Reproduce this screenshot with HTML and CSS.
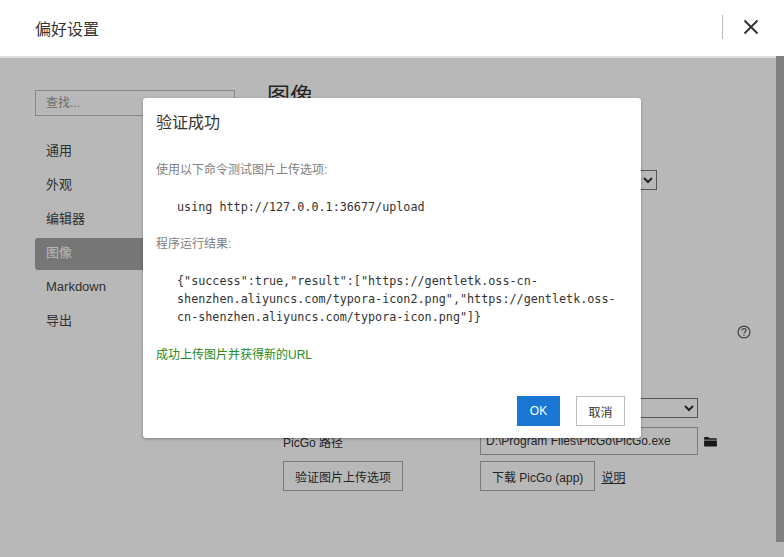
FILE: index.html
```html
<!DOCTYPE html>
<html lang="zh">
<head>
<meta charset="utf-8">
<title>偏好设置</title>
<link rel="stylesheet" href="styles.css">
</head>
<body>
<header class="titlebar">
  <h2 class="titlebar-name">偏好设置</h2>
  <span class="titlebar-sep"></span>
  <svg class="close-icon" viewBox="0 0 16 16"><path d="M1.5 1.5 14.5 14.5M14.5 1.5 1.5 14.5"/></svg>
</header>
<div class="below">
  <div class="scroller">
    <nav class="sidebar">
      <input class="search" placeholder="查找...">
      <ul class="nav">
        <li>通用</li>
        <li>外观</li>
        <li>编辑器</li>
        <li class="active">图像</li>
        <li>Markdown</li>
        <li>导出</li>
      </ul>
    </nav>
    <main class="prefs">
      <h1 class="prefs-title">图像</h1>
      <div class="row-select"><select class="select-short"><option></option></select></div>
      <div class="row-help">
        <svg class="help-icon" viewBox="0 0 14 14"><circle cx="7" cy="7" r="5.9"/><path d="M5 5.6C5 4.4 5.9 3.7 7 3.7s2 .7 2 1.8C9 7 7 7 7 8.6"/><circle class="dot" cx="7" cy="10.3" r=".8"/></svg>
      </div>
      <div class="upload-grid">
        <span></span>
        <select class="select-wide"><option></option></select>
        <span></span>
        <label class="path-label">PicGo 路径</label>
        <input class="path-input" value="D:\Program Files\PicGo\PicGo.exe">
        <svg class="folder-icon" viewBox="0 0 14 12"><path d="M0 2a1 1 0 0 1 1-1h3.6l1.4 1.5h7a1 1 0 0 1 1 1V4H0zM0 5h14v5.5a1 1 0 0 1-1 1H1a1 1 0 0 1-1-1z"/></svg>
        <button class="btn-plain">验证图片上传选项</button>
        <div class="download"><button class="btn-plain">下载 PicGo (app)</button><a class="doc-link">说明</a></div>
      </div>
    </main>
  </div>
  <div class="scroll-track"><div class="scroll-thumb"></div></div>
  <div class="overlay">
    <section class="dialog">
      <h3 class="dialog-title">验证成功</h3>
      <p class="note">使用以下命令测试图片上传选项:</p>
      <pre class="code">using http://127.0.0.1:36677/upload</pre>
      <p class="note">程序运行结果:</p>
      <pre class="code">{"success":true,"result":["https://gentletk.oss-cn-shenzhen.aliyuncs.com/typora-icon2.png","https://gentletk.oss-cn-shenzhen.aliyuncs.com/typora-icon.png"]}</pre>
      <p class="ok-note">成功上传图片并获得新的URL</p>
      <div class="actions">
        <button class="btn-ok">OK</button>
        <button class="btn-cancel">取消</button>
      </div>
    </section>
  </div>
  <div class="rule"></div>
</div>
</body>
</html>
```
FILE: styles.css
```css
* { box-sizing: border-box; }
html, body { margin: 0; height: 100%; }
body {
  width: 784px;
  height: 557px;
  overflow: hidden;
  display: flex;
  flex-direction: column;
  background: #fff;
  color: #333;
  font-family: "Liberation Sans", "Noto Sans CJK SC", sans-serif;
  font-size: 12px;
}
.titlebar {
  height: 56px;
  flex: none;
  display: flex;
  align-items: center;
  padding: 0 25px 2px 35px;
}
.titlebar-name { margin: 2px 0 0; flex: 1; font-size: 16px; font-weight: 400; color: #333; }
.titlebar-sep { width: 1px; height: 24px; background: #bbb; margin-right: 20px; }
.close-icon { width: 16px; height: 16px; fill: none; stroke: #333; stroke-width: 2; }

.below { position: relative; flex: 1; display: flex; min-height: 0; }
.rule { position: absolute; left: 0; right: 8px; top: 0; height: 2px; background: #ddd; z-index: 1; }
.scroller { flex: 1; display: flex; padding: 34px 0 0 35px; min-width: 0; }
.scroll-track { width: 8px; flex: none; }
.scroll-thumb { height: 486px; background: #b2b2b2; }

.sidebar { width: 200px; flex: none; }
.search {
  display: block;
  width: 200px;
  height: 26px;
  padding: 0 10px;
  border: 1px solid #bbb;
  border-radius: 0;
  background: #fff;
  font: 12px "Liberation Sans", "Noto Sans CJK SC", sans-serif;
}
.search::placeholder { color: #999; }
.nav { list-style: none; margin: 20px 0 0; padding: 0; display: flex; flex-direction: column; gap: 2px; }
.nav li {
  height: 32px;
  line-height: 30px;
  padding-left: 11px;
  font-size: 13px;
  border-radius: 3px;
  color: #444;
}
.nav li.active { background: #a4a4a4; color: #fff; }

.prefs { flex: 1; padding-left: 33px; min-width: 0; }
.prefs-title { margin: -10px 0 0 -1px; font-size: 23px; line-height: 32px; font-weight: 400; color: #333; }
.row-select { margin-top: 58px; display: flex; justify-content: flex-end; padding-right: 119px; }
.select-short { width: 60px; height: 20px; }
select {
  border: 1px solid #777;
  border-radius: 0;
  background: #fff;
  color: #333;
  font: 12px "Liberation Sans", sans-serif;
}
.row-help { margin-top: 135px; display: flex; justify-content: flex-end; padding-right: 25px; }
.help-icon { width: 14px; height: 14px; fill: none; stroke: #666; stroke-width: 1.3; }
.help-icon .dot { fill: #666; stroke: none; }

.upload-grid {
  margin-top: 59px;
  padding-left: 15px;
  display: grid;
  grid-template-columns: 197px 218px 1fr;
  row-gap: 6px;
  align-items: center;
}
.select-wide { width: 218px; height: 20px; margin-bottom: 3px; }
.path-label { color: #333; }
.path-input {
  width: 218px;
  height: 28px;
  padding: 0 5px;
  border: 1px solid #aaa;
  background: #fff;
  color: #333;
  font: 12px "Liberation Sans", sans-serif;
}
.folder-icon { width: 13px; height: 11px; margin-left: 6px; fill: #222; }
.btn-plain {
  height: 30px;
  padding: 0 11px;
  border: 1px solid #aaa;
  border-radius: 0;
  background: #fff;
  color: #333;
  font: 12px "Liberation Sans", "Noto Sans CJK SC", sans-serif;
  justify-self: start;
}
.download { display: flex; align-items: center; grid-column: 2 / 4; gap: 6px; }
.doc-link { text-decoration: underline; color: #333; }

.overlay {
  position: absolute;
  inset: 0;
  background: rgba(0, 0, 0, .28);
  padding: 42px 0 0 143px;
}
.dialog {
  width: 498px;
  height: 340px;
  padding: 13px 13px 12px;
  display: flex;
  flex-direction: column;
  background: #fff;
  border-radius: 3px;
  box-shadow: 0 1px 3px rgba(0, 0, 0, .3);
}
.dialog-title { margin: 0; font-size: 16px; line-height: 24px; font-weight: 400; color: #333; }
.note { margin: 0; color: #808080; line-height: 18px; }
.dialog-title + .note { margin-top: 26px; }
.code {
  margin: 19px 0 19px;
  padding-left: 21px;
  width: 470px;
  font-family: "DejaVu Sans Mono", monospace;
  font-size: 11.75px;
  line-height: 18px;
  color: #333;
  white-space: pre-wrap;
}
.ok-note { margin: 1px 0 0; color: #228b22; line-height: 18px; }
.actions { margin-top: auto; display: flex; justify-content: flex-end; gap: 16px; padding-right: 3px; }
.btn-ok, .btn-cancel { height: 30px; border-radius: 0; font: 12px "Liberation Sans", "Noto Sans CJK SC", sans-serif; }
.btn-ok { width: 43px; border: 0; background: #1976d2; color: #fff; }
.btn-cancel { width: 49px; border: 1px solid #bbb; background: #fff; color: #333; }
```
